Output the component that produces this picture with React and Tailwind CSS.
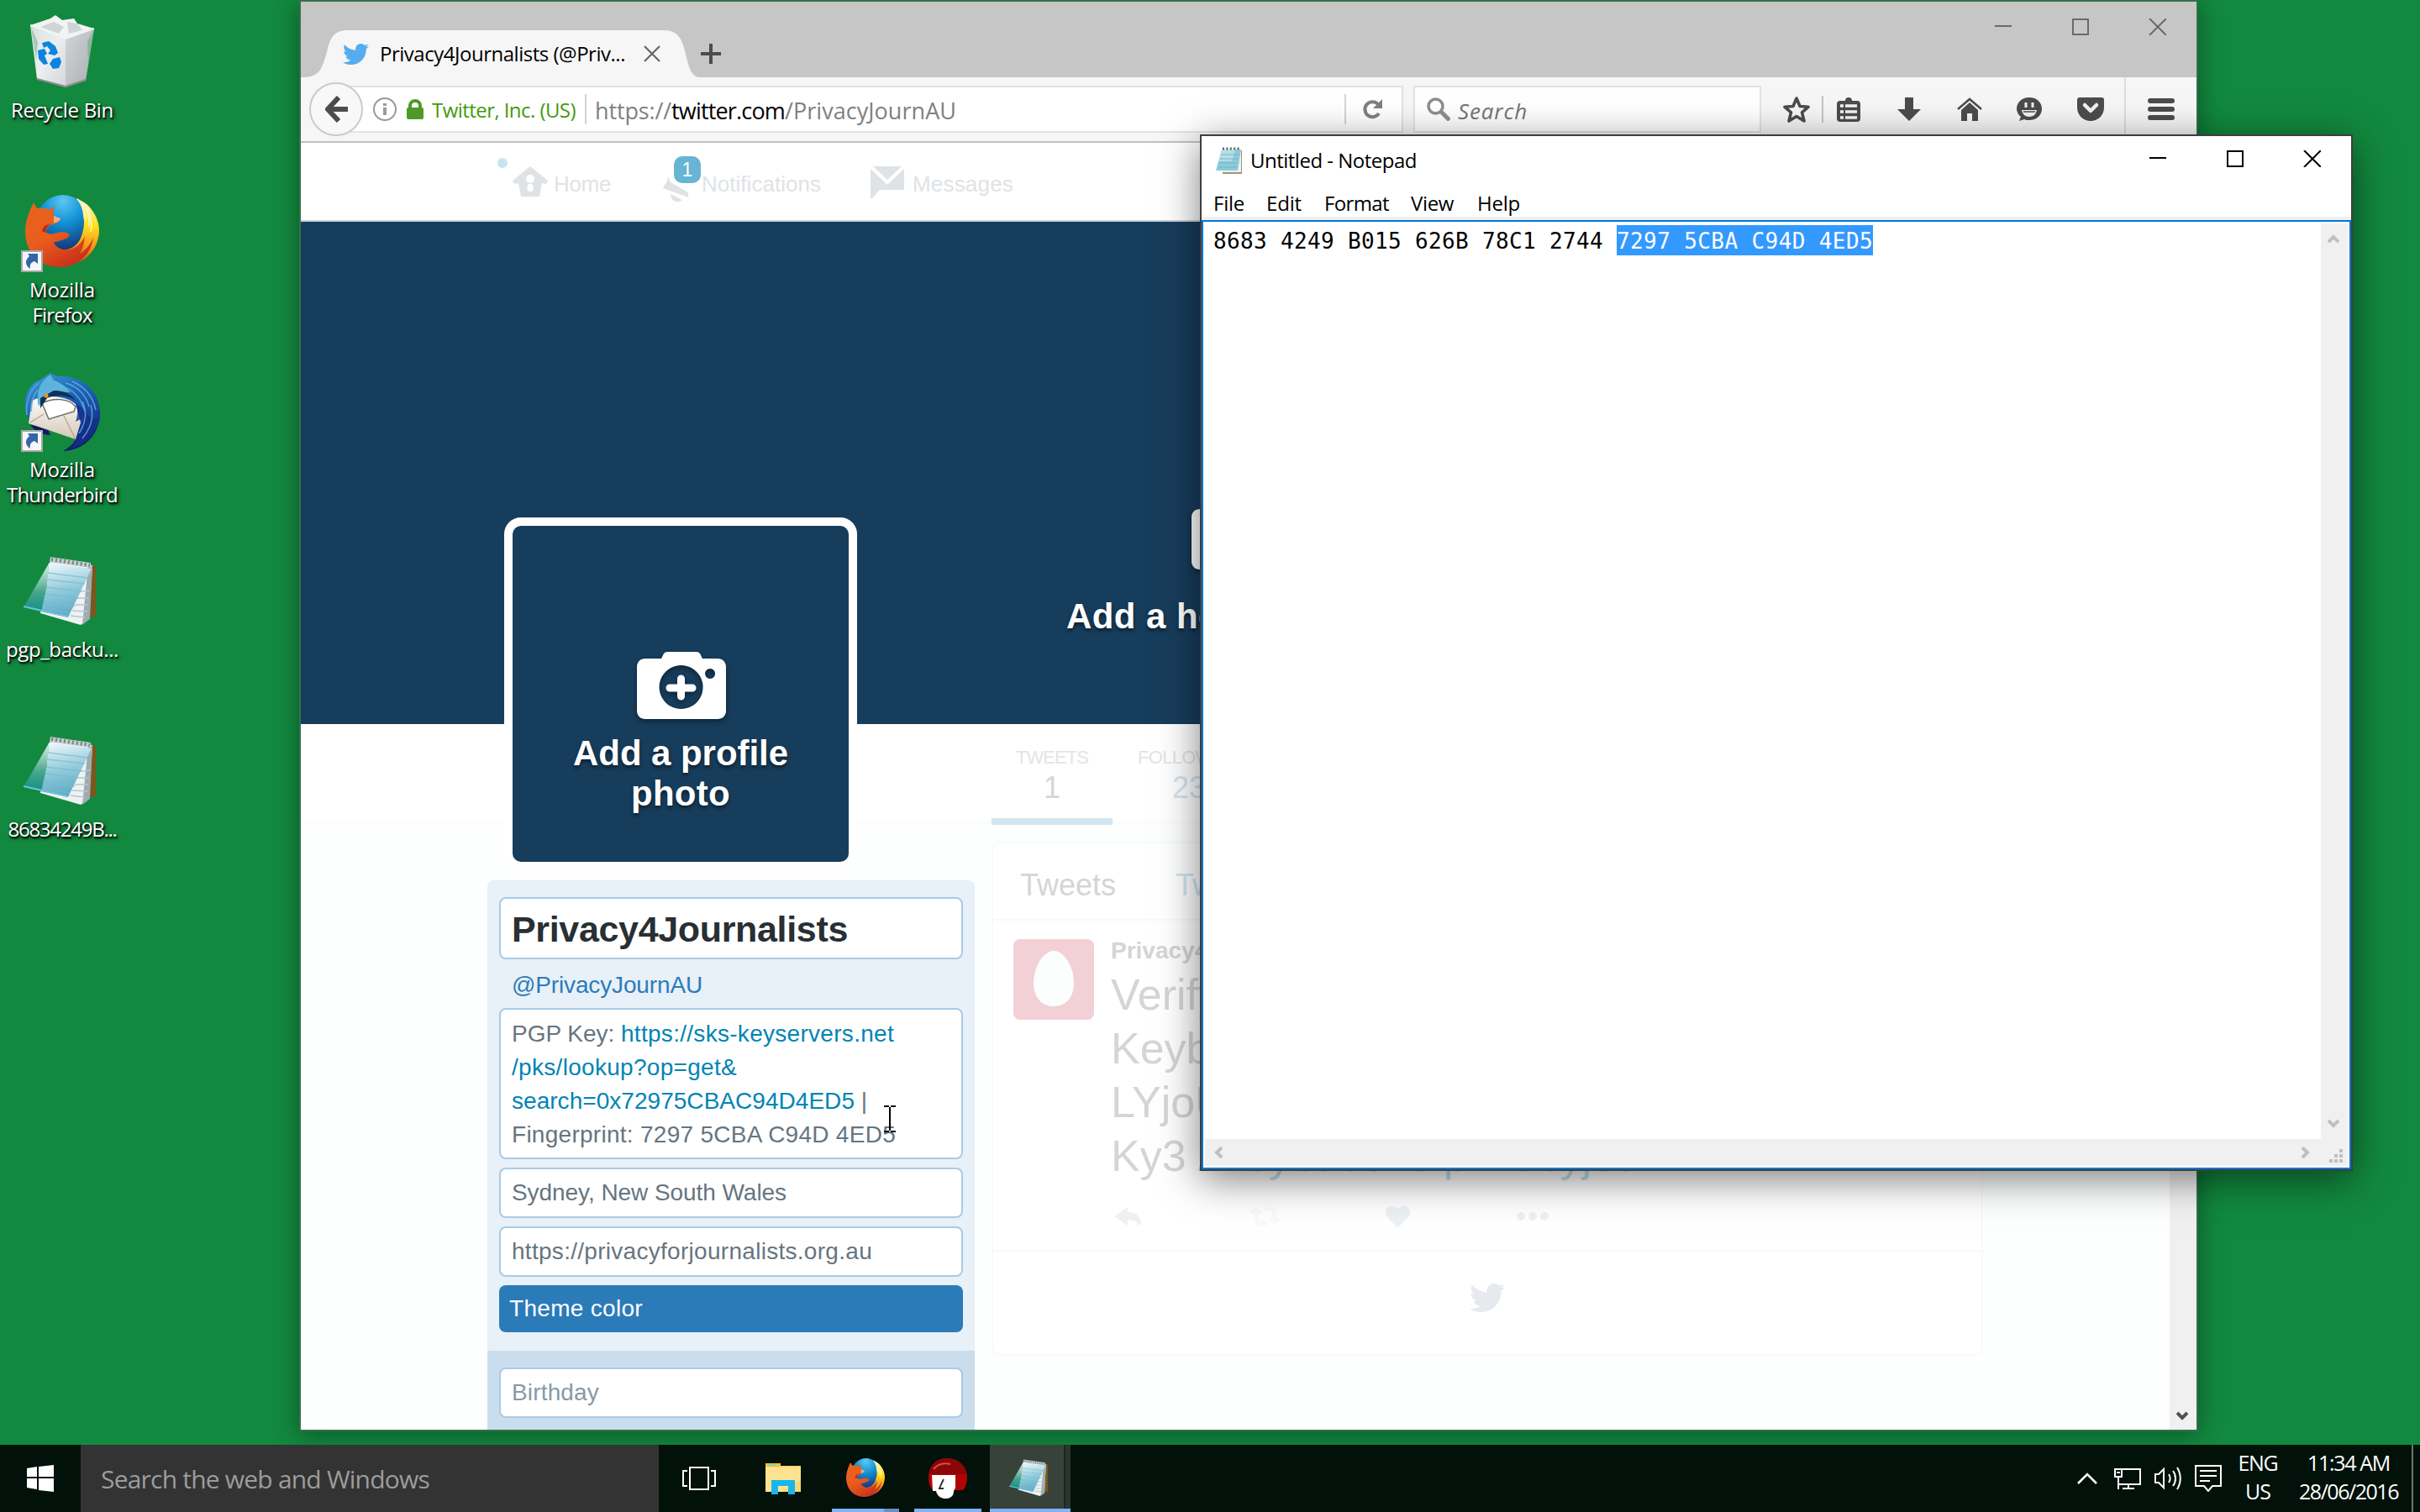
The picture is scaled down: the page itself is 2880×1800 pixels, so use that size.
import React, { useLayoutEffect, useRef, useState } from "react";
import { FaTwitter, FaHeart } from "react-icons/fa";

/* Single line of text spread to a given width through letter spacing. */
function T({ w, className = "", children }) {
  const ref = useRef(null);
  const [ls, setLs] = useState(0);
  useLayoutEffect(() => {
    if (!w) return;
    const natural = ref.current.getBoundingClientRect().width;
    setLs((w - natural) / String(children).length);
  }, []);
  return (
    <span ref={ref} style={{ letterSpacing: `${ls}px` }} className={`inline-block whitespace-pre ${className}`}>
      {children}
    </span>
  );
}

function FirefoxIcon({ className }) {
  return (
    <svg viewBox="0 0 88 74" preserveAspectRatio="none" className={className}>
      <defs>
        <radialGradient id="ffGlobe" cx="0.5" cy="0.1" r="0.95">
          <stop offset="0" stopColor="#5cc8f4" />
          <stop offset="0.4" stopColor="#1292d6" />
          <stop offset="0.75" stopColor="#144f92" />
          <stop offset="1" stopColor="#1c2456" />
        </radialGradient>
        <linearGradient id="ffTail" x1="0" y1="0" x2="0" y2="1">
          <stop offset="0" stopColor="#fffbd0" />
          <stop offset="0.4" stopColor="#ffe01c" />
          <stop offset="0.7" stopColor="#f89a1c" />
          <stop offset="1" stopColor="#dc4a1c" />
        </linearGradient>
        <linearGradient id="ffBody" x1="0" y1="0" x2="0.6" y2="1">
          <stop offset="0" stopColor="#e8641c" />
          <stop offset="0.55" stopColor="#ea5c1e" />
          <stop offset="1" stopColor="#c8321c" />
        </linearGradient>
      </defs>
      <ellipse cx="45" cy="30" rx="33" ry="30" fill="url(#ffGlobe)" />
      <path d="M62 4c8 3 13 6 17 11c6 7 9 14 9 22c-1 20-18 34-40 35l-6-16c12 2 22-5 25-14c3-8 4-14 2-20c0-7-3-13-7-18z" fill="url(#ffTail)" />
      <path d="M62 4c7 7 9 15 10 22M68 8c7 8 9 16 8 25M74 14c5 8 6 16 4 24" stroke="#fff6c0" strokeWidth="1.5" fill="none" />
      <path d="M10 8l4 6c6-1 12 0 16 1l5-4l-2 10c2 3 5 3 9 3c-1 4-5 5-9 6c-5 1-7 4-9 8c5 3 9 2 14 1c5-1 11-2 15 2c-2 4-8 5-12 6c-4 2-7 1-7 2c3 5 10 8 18 7c8-1 15-6 19-14c-1 8-2 13-6 18c7-3 12-9 16-16c-3 18-19 30-40 30C16 74 0 58 0 37c0-9 4-17 6-22z" fill="url(#ffBody)" />
      <path d="M34 21c3 2 6 2 8 3c-1 3-4 4-8 5z" fill="#f4a888" />
      <path d="M24 38c-4 1-5-2-1-6c3-2 7-2 10-3c-5 1-8 4-9 9z" fill="#b8281c" />
    </svg>
  );
}

function ThunderbirdIcon({ className }) {
  return (
    <svg viewBox="0 0 92 94" className={className}>
      <defs>
        <linearGradient id="tbBody" x1="0.2" y1="0" x2="0.7" y2="1">
          <stop offset="0" stopColor="#3a94d0" />
          <stop offset="0.4" stopColor="#1c62b4" />
          <stop offset="0.75" stopColor="#183c94" />
          <stop offset="1" stopColor="#0c1458" />
        </linearGradient>
        <linearGradient id="tbMail" x1="0" y1="0" x2="0" y2="1">
          <stop offset="0" stopColor="#fffefc" />
          <stop offset="1" stopColor="#d4c8b8" />
        </linearGradient>
      </defs>
      <path d="M32 0l8 4c28-2 50 16 51 42c1 26-18 46-44 47c10-6 16-12 16-20L8 58C-4 40 2 14 20 8z" fill="url(#tbBody)" />
      <path d="M8 62c6 8 14 12 24 12l-4-10z" fill="#141a60" />
      <path d="M10 33c14-8 40-6 52 4l6 22l-6 20L6 60z" fill="url(#tbMail)" />
      <path d="M22 36c14-7 32-6 40 4l-2 6l-30 9z" fill="#fff" stroke="#6c665c" strokeWidth="1.4" />
      <path d="M8 59l16-10M62 79L48 51" stroke="#b0a490" strokeWidth="1.2" />
      <path d="M32 2C20 10 14 22 18 40l8-14c8-4 20-4 30-3c-8-8-12-12-20-14z" fill="#5cb4dc" />
      <path d="M20 30l16-9c9 0 20 2 26 12c-12-8-26-6-34-3l-8 12z" fill="#123058" />
      <circle cx="27" cy="27" r="2.6" fill="#f0901c" />
      <path d="M62 36c4 8 2 16 0 22l8-4c0 14-4 26-14 36c18-4 32-18 35-38C80 62 76 44 62 36z" fill="#16308c" opacity="0.8" />
      <path d="M50 12c14 4 24 14 28 28M58 10c14 6 24 16 28 34M44 16c14 2 26 14 30 34M70 34c6 12 4 26-4 38M80 38c4 14 0 28-10 40" stroke="#6cbce8" strokeWidth="1.6" fill="none" opacity="0.7" />
      <path d="M4 50C2 34 8 20 18 12M9 46c0-10 3-20 8-26" stroke="#58a8dc" strokeWidth="2" fill="none" opacity="0.8" />
    </svg>
  );
}

function NotepadIcon({ className }) {
  return (
    <svg viewBox="0 0 86 82" className={className}>
      <defs>
        <linearGradient id="npPage" x1="0.3" y1="0" x2="0.5" y2="1">
          <stop offset="0" stopColor="#eaf6fa" />
          <stop offset="0.5" stopColor="#90cbdb" />
          <stop offset="1" stopColor="#5aa8c4" />
        </linearGradient>
        <linearGradient id="npFold" x1="0" y1="0" x2="0" y2="1">
          <stop offset="0" stopColor="#dff2ea" />
          <stop offset="0.6" stopColor="#46a58c" />
          <stop offset="1" stopColor="#148f86" />
        </linearGradient>
      </defs>
      <path d="M78 10l8 2v60l-8 1z" fill="#7c561c" />
      <path d="M32 6L20 68l48 14l10-7l4-64z" fill="#eef2f4" />
      <path d="M77 11l5 1l-3 63l-9 7z" fill="#9dabb2" />
      <path d="M68 42l11-1M64 50l14 0M61 58l16 0M58 65l18 1M56 71l17 2" stroke="#b8c6cc" strokeWidth="1.5" />
      <path d="M30 9L0 61l22 5l6-30z" fill="url(#npFold)" />
      <path d="M30 8l51 7L53 73L21 66l7-30z" fill="url(#npPage)" />
      <path d="M29 20l48 6M28 28l45 5M27 37l42 5M26 45l39 5M24 54l37 6M23 62l32 6" stroke="#7fb9cc" strokeWidth="1.4" opacity="0.7" />
      <path d="M0 60l22 5l31 7" stroke="#6cc4dc" strokeWidth="2" fill="none" />
      <path d="M32 1l48 7v6l-49-7z" fill="#c8d0d2" />
      <path d="M33 4l46 7" stroke="#7c8688" strokeWidth="4.5" strokeDasharray="2.2 2.8" />
    </svg>
  );
}

function RecycleIcon({ className }) {
  return (
    <svg viewBox="0 0 76 86" className={className}>
      <defs>
        <linearGradient id="rbL" x1="0" y1="0" x2="1" y2="1">
          <stop offset="0" stopColor="#d8e0e0" />
          <stop offset="0.5" stopColor="#eceef0" />
          <stop offset="1" stopColor="#d4d8dc" />
        </linearGradient>
        <linearGradient id="rbR" x1="0" y1="0" x2="1" y2="1">
          <stop offset="0" stopColor="#d4d6d8" />
          <stop offset="1" stopColor="#a8aeb2" />
        </linearGradient>
      </defs>
      <path d="M0 12l42 16v58L8 76z" fill="url(#rbL)" />
      <path d="M76 16L42 28v58l24-8z" fill="url(#rbR)" />
      <path d="M0 12L24 4l6-4l8 6l14-2l4 6l20 6l-34 12z" fill="#f2f4f4" />
      <path d="M12 14l16-6l12 6l-6 8zM44 8l12 2l6 8l-16 4z" fill="#cfd4d6" />
      <path d="M0 12l42 16l34-12" fill="none" stroke="#eef4f2" strokeWidth="2" />
      <path d="M60 36l8-6l-4 20l-8 14l6-16z" fill="#bcc2c6" />
      <path d="M1 14l6 40l2-22z" fill="#5aa97a" opacity="0.45" />
      <path d="M75 18l-6 44l-1-30z" fill="#5aa97a" opacity="0.5" />
      <path d="M8 76l34 9l24-8" fill="none" stroke="#8c8c8c" strokeWidth="2" />
      <g fill="#0a84e0">
        <path d="M14 33l8-2l8 6l3 8l-4 3l-8-2l3-4l-4-5l-4 2z" />
        <path d="M9 42l8-2l3 6l-3 2l4 10l-5 1l-6-7z" />
        <path d="M23 58l4-6l8-2l2 6l-3 7l-7 1z" />
      </g>
    </svg>
  );
}

function Shortcut() {
  return (
    <svg viewBox="0 0 26 26" className="absolute bottom-0 left-0 h-[26px] w-[26px]">
      <rect x="1" y="1" width="24" height="24" fill="#f6f6f6" stroke="#a8a8a8" strokeWidth="2" />
      <path d="M8 4h12v12l-4-3c-4 1-6 4-5 9c-6-4-7-10-1-15z" fill="#3465a8" />
    </svg>
  );
}

function DesktopItem({ icon, lines }) {
  return (
    <div className="flex h-[214px] flex-col items-center">
      <div className="flex h-[104px] w-full justify-center">{icon}</div>
      {lines.map(([text, w]) => (
        <T key={text} w={w} className="text-[24px] leading-[30px] text-white [text-shadow:1px_2px_2px_#000,2px_2px_4px_rgba(0,0,0,.8)]">
          {text}
        </T>
      ))}
    </div>
  );
}

function WinControls({ color, gap }) {
  return (
    <svg viewBox="0 0 204 20" className={gap} fill="none" stroke={color} strokeWidth="2">
      <path d="M0 9h20" />
      <rect x="93" y="1" width="18" height="18" />
      <path d="M184 0l20 20M204 0l-20 20" />
    </svg>
  );
}

function Camera({ className }) {
  return (
    <svg viewBox="0 0 106 80" className={className}>
      <path fill="#fff" fillRule="evenodd" d="M10 8H29l3-6c1-1 2-2 4-2h35c2 0 3 1 4 2l3 6h18c6 0 10 4 10 10v52c0 6-4 10-10 10H10C4 80 0 76 0 70V18C0 12 4 8 10 8zM52.500 16a26 26 0 1 0 .1 0zM87 20a6 6 0 1 0 .1 0z" />
      <path stroke="#fff" strokeWidth="9" strokeLinecap="round" d="M39 43h27M52.500 32v21" />
    </svg>
  );
}

function ToolIcons() {
  return (
    <div className="flex items-center">
      <svg viewBox="0 0 32 32" className="ml-[26px] h-8 w-8" fill="none" stroke="#4c4c4c" strokeWidth="3.600" strokeLinejoin="round">
        <path d="M16 3l4 9.500l10 .8l-7.500 6.500L25 30l-9-5.500L7 30l2.500-10.200L2 13.300l10-.8z" />
      </svg>
      <div className="ml-[14px] h-8 w-[2px] bg-[#c4c4c4]" />
      <svg viewBox="0 0 28 30" className="ml-4 h-[30px] w-7">
        <path fill="#4c4c4c" d="M4 5h6a4 4 0 0 1 8 0h6a4 4 0 0 1 4 4v17a4 4 0 0 1-4 4H4a4 4 0 0 1-4-4V9a4 4 0 0 1 4-4z" />
        <path stroke="#f4f4f4" strokeWidth="3.600" d="M4 11h4M10 11h14M4 18h4M10 18h14M4 25h4M10 25h14" />
      </svg>
      <svg viewBox="0 0 28 28" className="ml-[44px] h-7 w-7">
        <path fill="#4c4c4c" d="M9 0h10v14h9L14 28L0 14h9z" />
      </svg>
      <svg viewBox="0 0 32 28" className="ml-[42px] h-7 w-8">
        <path d="M2 14L16 2l14 12" stroke="#4c4c4c" strokeWidth="2.500" fill="none" />
        <path fill="#4c4c4c" d="M6 15L16 6l10 9v13h-7v-9h-6v9H6z" />
      </svg>
      <svg viewBox="0 0 30 28" className="ml-[40px] h-7 w-[30px]">
        <path fill="#4c4c4c" d="M15 0c9 0 15 6 15 13.500S24 27 15 27c-3 0-4 0-6-1l-6 2l2-5c-3-2-5-6-5-9.500C0 6 6 0 15 0z" />
        <path stroke="#f2f2f2" strokeWidth="3" d="M11 6v6M19 6v6" />
        <path d="M6 15h18c-1 5-4 8-9 8s-8-3-9-8z" fill="#f2f2f2" />
        <path d="M8 17h14" stroke="#4c4c4c" strokeWidth="1.500" />
      </svg>
      <svg viewBox="0 0 32 28" className="ml-[42px] h-7 w-8">
        <path fill="#4c4c4c" d="M3 0h26a3 3 0 0 1 3 3v9c0 9-7 16-16 16S0 21 0 12V3a3 3 0 0 1 3-3z" />
        <path d="M9 9l7 7l7-7" stroke="#f2f2f2" strokeWidth="4.500" strokeLinecap="round" strokeLinejoin="round" fill="none" />
      </svg>
      <div className="ml-6 h-[76px] w-[2px] bg-[#dcdcdc]" />
      <svg viewBox="0 0 32 26" className="ml-[26px] h-[26px] w-8" stroke="#4c4c4c" strokeWidth="6" strokeLinecap="round">
        <path d="M3 3h26M3 13h26M3 23h26" />
      </svg>
    </div>
  );
}

function FirefoxChrome() {
  return (
    <>
      <div className="flex h-[90px] bg-[#c6c6c6]">
        <div className="relative mt-[34px] flex h-14 w-[476px] items-center">
          <svg viewBox="0 0 476 56" className="absolute inset-0 h-14 w-[476px]">
            <path fill="#f6f6f6" d="M4 56C24 56 26 42 31 26C35 8 40 0 56 0H432C450 0 454 12 458 28C462 44 464 56 476 56z" />
          </svg>
          <FaTwitter className="relative ml-[50px] h-[31px] w-[31px] text-[#55acee]" />
          <T w={292} className="relative -mt-px ml-[13px] text-[24px] leading-8 text-black">Privacy4Journalists (@Priv...</T>
          <svg viewBox="0 0 20 20" className="relative ml-[22px] h-5 w-5" stroke="#666" strokeWidth="2.200"><path d="M1 1l18 18M19 1L1 19" /></svg>
        </div>
        <svg viewBox="0 0 24 24" className="mt-[50px] h-6 w-6" stroke="#4c4c4c" strokeWidth="4"><path d="M0 12h24M12 0v24" /></svg>
        <WinControls color="#6a6a6a" gap="mt-5 ml-auto mr-9 h-5 w-[204px]" />
      </div>
      <div className="flex h-[78px] items-center border-b-2 border-[#c0c0c0] bg-[#f6f6f6]">
        <div className="z-10 ml-[10px] flex h-16 w-16 items-center justify-center rounded-full border-2 border-[#cacaca] bg-[#f8f8f8]">
          <svg viewBox="0 0 28 32" className="h-8 w-7" stroke="#4c4c4c" strokeWidth="6" fill="none" strokeLinecap="butt" strokeLinejoin="round">
            <path d="M17 2L4 16l13 14M4 16h24" />
          </svg>
        </div>
        <div className="-ml-4 flex h-14 w-[1254px] items-center border-2 border-[#e3e3e3] bg-white">
          <svg viewBox="0 0 28 28" className="ml-[26px] h-7 w-7" fill="none" stroke="#9a9a9a" strokeWidth="2">
            <circle cx="14" cy="14" r="13" />
            <path d="M14 12v9M14 7v3" strokeWidth="4" />
          </svg>
          <svg viewBox="0 0 20 24" className="ml-3 h-6 w-5">
            <rect y="10" width="20" height="14" rx="2" fill="#4d9a26" />
            <path d="M4 11V8a6 6 0 0 1 12 0v3" stroke="#4d9a26" strokeWidth="4" fill="none" />
          </svg>
          <T w={171} className="mt-[2px] ml-[10px] text-[24px] leading-8 text-[#449a0a]">Twitter, Inc. (US)</T>
          <div className="ml-[11px] h-9 w-[2px] bg-[#d4d4d4]" />
          <div className="mt-[3px] ml-[10px] flex text-[27px] leading-8 text-[#808080]">
            <T w={91}>https://</T>
            <T w={135} className="text-black">twitter.com</T>
            <T w={204}>/PrivacyJournAU</T>
          </div>
          <div className="ml-auto h-9 w-[2px] bg-[#d4d4d4]" />
          <svg viewBox="0 0 24 24" className="mr-[22px] ml-5 h-6 w-6">
            <path d="M19 17a9 9 0 1 1-1-11" fill="none" stroke="#808080" strokeWidth="4" />
            <path d="M23 0v11H12z" fill="#808080" />
          </svg>
        </div>
        <div className="ml-3 flex h-14 w-[414px] items-center border-2 border-[#e3e3e3] bg-white">
          <svg viewBox="0 0 28 28" className="ml-[14px] h-7 w-7" fill="none" stroke="#8e8e8e">
            <circle cx="10.500" cy="10.500" r="8.500" strokeWidth="3.500" />
            <path d="M17 17l10 10" strokeWidth="5" />
          </svg>
          <T w={83} className="mt-[3px] ml-[9px] text-[26px] leading-8 text-[#757575] italic">Search</T>
        </div>
        <ToolIcons />
      </div>
    </>
  );
}

function TwitterNav() {
  return (
    <div className="relative flex h-[94px] items-start border-b-2 border-[#ccd1d6] bg-white font-['Liberation_Sans',sans-serif] text-[26px] leading-8 text-[#dfe3e6]">
      <div className="absolute top-[18px] left-[234px] h-3 w-3 rounded-full bg-[#c6e5ef]" />
      <svg viewBox="0 0 42 36" className="mt-7 ml-[252px] h-9 w-[42px]">
        <path fill="#dfe3e6" d="M21 0L42 17l-2 4l-5-1l-3 16H10L7 20l-5 1l-2-4z" />
        <circle cx="21" cy="15" r="5" fill="#fff" />
        <rect x="17.500" y="21" width="7" height="9" rx="3" fill="#fff" />
      </svg>
      <T w={68} className="mt-[33px] ml-[7px]">Home</T>
      <div className="relative mt-9 ml-[62px] h-9 w-[46px]">
        <svg viewBox="0 0 30 36" className="h-9 w-[30px]">
          <path fill="#dfe3e6" d="M6 4l3 7l21 12v6L0 18c2-5 6-8 6-14zM9 25l14 7c-4 5-14 2-14-7z" />
        </svg>
        <div className="absolute -top-5 left-[13px] flex h-8 w-8 items-center justify-center rounded-[10px] bg-[#67b4d3] text-[23px] leading-none text-white">1</div>
      </div>
      <T w={142} className="mt-[33px]">Notifications</T>
      <svg viewBox="0 0 40 38" className="mt-7 ml-[59px] h-[38px] w-10">
        <path fill="#dfe3e6" d="M3 0h34L20 16zM0 3l20 19L40 3v25H11L2 38H0z" />
      </svg>
      <T w={120} className="mt-[33px] ml-[10px]">Messages</T>
    </div>
  );
}

function Banner() {
  return (
    <div className="relative h-[598px] bg-[#173d5c] font-['Liberation_Sans',sans-serif] text-[42px] leading-[48px] font-bold text-white">
      <div className="flex flex-col items-center pt-[334px]">
        <Camera className="ml-[2px] h-20 w-[106px] drop-shadow-[0_3px_3px_rgba(0,0,0,.4)]" />
        <T w={402} className="mt-[32px] [text-shadow:0_3px_4px_rgba(0,0,0,.5)]">Add a header photo</T>
      </div>
      <div className="absolute top-[352px] left-[242px] flex h-[420px] w-[420px] flex-col items-center rounded-[20px] border-[10px] border-white bg-[#173d5c]">
        <Camera className="mt-[150px] ml-[2px] h-20 w-[106px] drop-shadow-[0_3px_3px_rgba(0,0,0,.4)]" />
        <T w={256} className="mt-[17px] [text-shadow:0_3px_4px_rgba(0,0,0,.5)]">Add a profile</T>
        <T w={118} className="[text-shadow:0_3px_4px_rgba(0,0,0,.5)]">photo</T>
      </div>
    </div>
  );
}

function Stat({ label, value, w, labelClass, valueClass }) {
  return (
    <div className="flex flex-col items-center">
      <T w={w} className={`text-[22px] leading-6 ${labelClass}`}>{label}</T>
      <span className={`mt-[2px] text-[36px] leading-[44px] ${valueClass}`}>{value}</span>
    </div>
  );
}

const FIELD = "rounded-[8px] border-2 border-[#a9cae6] bg-white pl-[13px]";

function ProfileForm() {
  return (
    <div className="mt-[68px] ml-[222px] h-[654px] w-[580px] rounded-t-lg bg-[#e8f0f8] text-[28px] leading-10 text-[#66757f]">
      <div className="h-[560px] px-[14px] pt-5">
        <div className={`flex h-[74px] items-center pt-[2px] ${FIELD}`}>
          <T w={400} className="text-[43px] leading-[50px] font-bold text-[#292f33]">Privacy4Journalists</T>
        </div>
        <div className="h-[58px] pt-[11px] pl-[15px] text-[#2b7bb9]">
          <T w={227}>@PrivacyJournAU</T>
        </div>
        <div className={`flex h-[180px] flex-col pt-[9px] ${FIELD}`}>
          <div className="flex h-10">
            <T w={130}>PGP Key: </T>
            <T w={325} className="text-[#0084b4]">https://sks-keyservers.net</T>
          </div>
          <T w={268} className="self-start text-[#0084b4]">/pks/lookup?op=get&amp;</T>
          <div className="flex h-10">
            <T w={408} className="text-[#0084b4]">search=0x72975CBAC94D4ED5</T>
            <T>{" |"}</T>
          </div>
          <T w={457} className="self-start">Fingerprint: 7297 5CBA C94D 4ED5</T>
        </div>
        <div className={`mt-[10px] flex h-[60px] items-center ${FIELD}`}><T w={327}>Sydney, New South Wales</T></div>
        <div className={`mt-[10px] flex h-[60px] items-center ${FIELD}`}><T w={429}>https://privacyforjournalists.org.au</T></div>
        <div className="mt-[10px] flex h-14 items-center rounded-lg bg-[#2b7bb9] pl-3 text-white"><T w={159}>Theme color</T></div>
      </div>
      <div className="h-[94px] bg-[#cadded] px-[14px] pt-5">
        <div className={`flex h-[60px] items-center text-[#8899a6] ${FIELD}`}><T w={104}>Birthday</T></div>
      </div>
    </div>
  );
}

function Timeline() {
  return (
    <div className="mt-[22px] ml-5 h-[612px] w-[1180px] rounded-[10px] border-2 border-[#f7fafa] bg-white">
      <div className="flex h-[92px] items-center border-b-2 border-[#f7fafa] pt-[10px] text-[36px]">
        <T w={114} className="ml-8 leading-10 text-[#d4d5d6]">Tweets</T>
        <span className="ml-[71px] leading-10 text-[#cce6f0]">Tweets &amp; replies</span>
      </div>
      <div className="flex h-[394px] items-start border-b-2 border-[#f7fafa]">
        <svg viewBox="0 0 96 96" className="mt-[22px] ml-6 h-24 w-24">
          <rect width="96" height="96" rx="8" fill="#f2d0d6" />
          <path d="M48 14c13 0 24 20 24 38S62 80 48 80S24 70 24 52S35 14 48 14z" fill="#fcfdfd" />
        </svg>
        <div className="ml-5 text-[#d4d5d7]">
          <div className="mt-5 h-8 text-[28px] leading-8 font-bold">Privacy4Journalists</div>
          <div className="mt-[4px] text-[52px] leading-[64px] whitespace-nowrap">
            <div>Verifying myself: I am</div>
            <div>Keybase.io.</div>
            <div>LYjoU</div>
            <div>Ky3 / <span className="text-[#c4dfea]">keybase.io/privacyjourn</span></div>
          </div>
          <div className="mt-[26px] flex h-7 items-center text-[#eef1f4]">
            <svg viewBox="0 0 32 22" className="ml-1 h-[22px] w-8" fill="currentColor">
              <path d="M0 11L16 0v6c10 0 16 5 16 14l-4 2c-1-5-5-7-12-7v7z" />
            </svg>
            <svg viewBox="0 0 38 24" className="ml-[129px] h-6 w-[38px]" fill="#f9fafb">
              <path d="M8 0l8 9h-5v9h8l4 5H6V9H0zM16 1h16v13h6l-8 10l-8-10h5V6h-7z" />
            </svg>
            <FaHeart className="ml-[124px] h-[29px] w-[29px]" />
            <svg viewBox="0 0 38 10" className="ml-[127px] h-[10px] w-[38px]" fill="currentColor">
              <circle cx="5" cy="5" r="5" /><circle cx="19" cy="5" r="5" /><circle cx="33" cy="5" r="5" />
            </svg>
          </div>
        </div>
      </div>
      <div className="flex h-[120px] justify-center pt-[34px]">
        <FaTwitter className="h-[42px] w-[42px] text-[#e6eaee]" />
      </div>
    </div>
  );
}

function FirefoxWindow() {
  return (
    <div className="absolute top-0 left-[356px] flex h-[1704px] w-[2260px] flex-col border-2 border-[#34704c] bg-white shadow-[0_4px_28px_rgba(0,0,0,.38)]">
      <FirefoxChrome />
      <div className="flex h-[1532px] overflow-hidden">
        <div className="w-[2224px] bg-[#fcfffe] font-['Liberation_Sans',sans-serif]">
          <TwitterNav />
          <Banner />
          <div className="flex h-[118px] border-b-2 border-[#f8fafa] bg-white pl-[822px]">
            <div className="z-0 h-[120px] w-36 border-b-8 border-[#d4e4f1] pt-[28px]">
              <Stat label="TWEETS" value="1" w={86} labelClass="text-[#e2e5e8]" valueClass="text-[#d4d6d8]" />
            </div>
            <div className="w-[186px] pt-[28px]">
              <Stat label="FOLLOWING" value="23" w={126} labelClass="text-[#e2e5e8]" valueClass="mr-[4px] text-[#d4e4f1]" />
            </div>
          </div>
          <div className="flex items-start">
            <ProfileForm />
            <Timeline />
          </div>
        </div>
        <div className="flex w-8 flex-col justify-end bg-[#f0f0f0] pb-[10px] pl-2">
          <svg viewBox="0 0 14 12" className="h-3 w-[14px]" fill="none" stroke="#505050" strokeWidth="4"><path d="M1 2l6 6l6-6" /></svg>
        </div>
      </div>
    </div>
  );
}

const MENU = [["File", 37, ""], ["Edit", 42, "ml-[26px]"], ["Format", 77, "ml-[27px]"], ["View", 51, "ml-[26px]"], ["Help", 51, "ml-[28px]"]];

function NotepadSmall() {
  return (
    <svg viewBox="0 0 32 32" className="ml-[17px] h-8 w-8">
      <path d="M9 4h22v28H8z" fill="#a09478" />
      <path d="M9 4h21v26H8z" fill="#eef2f4" />
      <path d="M7 3h23l-4 25H0z" fill="#8ccbd8" />
      <path d="M7 3h16l-4 14H3z" fill="#bfe3ea" opacity="0.8" />
      <path d="M6 9h22M5 14h22M4 19h22M3 24h22" stroke="#74b8c8" strokeWidth="1" />
      <path d="M8 2h21" stroke="#5a6467" strokeWidth="3" strokeDasharray="2 2.400" />
    </svg>
  );
}

function NotepadWindow() {
  return (
    <div className="absolute top-[160px] left-[1428px] flex h-[1234px] w-[1372px] flex-col border-2 border-[#3e3e3e] bg-white shadow-[0_10px_44px_rgba(0,0,0,.5)]">
      <div className="flex h-[58px] items-center">
        <NotepadSmall />
        <T w={198} className="ml-[9px] text-[24px] leading-8 text-black">Untitled - Notepad</T>
        <WinControls color="#000" gap="mb-1 ml-auto mr-[36px] h-5 w-[204px]" />
      </div>
      <div className="flex h-[42px] items-center border-b-4 border-[#f0f0f0] pt-[5px] pl-[14px] text-[24px] leading-8 text-black">
        {MENU.map(([t, w, m]) => <T key={t} w={w} className={m}>{t}</T>)}
      </div>
      <div className="flex h-[1130px] flex-col border-2 border-[#0078d7] p-[2px]">
        <div className="flex h-[1090px]">
          <div className="flex flex-1 items-start pt-[2px] pl-[10px] font-['DejaVu_Sans_Mono',monospace] text-[26px] text-black">
            <T w={480} className="h-9 leading-[38px]">{"8683 4249 B015 626B 78C1 2744 "}</T>
            <T w={305} className="h-9 bg-[#3399ff] leading-[38px] text-white">7297 5CBA C94D 4ED5</T>
          </div>
          <div className="flex w-8 flex-col justify-between bg-[#f0f0f0] py-3 pl-2">
            <svg viewBox="0 0 14 12" className="h-3 w-[14px]" fill="none" stroke="#bfbfbf" strokeWidth="4"><path d="M1 10l6-6l6 6" /></svg>
            <svg viewBox="0 0 14 12" className="h-3 w-[14px]" fill="none" stroke="#bfbfbf" strokeWidth="4"><path d="M1 2l6 6l6-6" /></svg>
          </div>
        </div>
        <div className="flex h-8 items-center bg-[#f0f0f0] pl-[10px]">
          <svg viewBox="0 0 12 14" className="h-[14px] w-3" fill="none" stroke="#bfbfbf" strokeWidth="4"><path d="M10 1L4 7l6 6" /></svg>
          <svg viewBox="0 0 12 14" className="ml-auto h-[14px] w-3" fill="none" stroke="#bfbfbf" strokeWidth="4"><path d="M2 1l6 6l-6 6" /></svg>
          <svg viewBox="0 0 16 16" className="mt-2 mr-[6px] ml-[22px] h-4 w-4" fill="#bfbfbf">
            <path d="M12 0h4v4h-4zM6 6h4v4H6zM12 6h4v4h-4zM0 12h4v4H0zM6 12h4v4H6zM12 12h4v4h-4z" />
          </svg>
        </div>
      </div>
    </div>
  );
}

function Taskbar() {
  return (
    <div className="absolute bottom-0 left-0 flex h-20 w-[2880px] items-stretch bg-[#021109] text-white">
      <div className="flex w-24 items-center justify-center">
        <svg viewBox="0 0 32 32" className="h-8 w-8" fill="#fff"><path d="M0 4l12-2v12H0zM14 2l18-2v14H14zM0 16h12v13L0 27zM14 16h18v16l-18-2z" /></svg>
      </div>
      <div className="flex w-[688px] items-center bg-[#333] pt-[2px] pl-6"><T w={391} className="text-[30px] leading-9 text-[#9c9c9c]">Search the web and Windows</T></div>
      <div className="flex w-24 items-center justify-center">
        <svg viewBox="0 0 40 28" className="h-7 w-10" fill="none" stroke="#fff" strokeWidth="2"><rect x="9" y="1" width="22" height="26" /><path d="M6 5H1v18h5M34 5h5v18h-5" /></svg>
      </div>
      <div className="flex w-[110px] items-center pl-[30px]">
        <svg viewBox="0 0 44 38" className="h-[38px] w-11">
          <path d="M1 1h18v3h24v31H1z" fill="#f8d774" />
          <path d="M1 6h42v14L22 35H1z" fill="#fde391" />
          <path d="M1 1h18v4H1z" fill="#f4c430" />
          <path d="M4 3h10" stroke="#7fd0c0" strokeWidth="2" />
          <path d="M8 21h28v17h-8V28H16v10H8z" fill="#19b5ee" />
        </svg>
      </div>
      <div className="flex w-20 flex-col justify-between">
        <FirefoxIcon className="mt-4 ml-[17px] h-[46px] w-[46px]" />
        <div className="flex h-1"><div className="w-[62px] bg-[#7db4f8]" /><div className="w-[18px] bg-[#6590c8]" /></div>
      </div>
      <div className="ml-[18px] flex w-20 flex-col justify-between border-b-4 border-[#7db4f8]">
        <svg viewBox="0 0 46 48" className="mt-4 ml-[17px] h-12 w-[46px]">
          <path d="M22 0c14 0 24 10 24 23c0 6-2 12-5 15H5C1 34 0 28 0 23C0 10 8 0 22 0z" fill="#b00404" />
          <path d="M22 0C34 0 44 8 45 19H1C2 8 10 0 22 0z" fill="#8c0606" />
          <path d="M6 13c5-6 12-8 20-6" stroke="#d65050" strokeWidth="2" fill="none" />
          <path d="M4 20h28v15l-2 4c0 6-4 9-10 9S10 44 9 39H5z" fill="#fff" />
          <path d="M18 25l-3 6M15 31l-2 5h5" stroke="#333" strokeWidth="2" fill="none" />
        </svg>
      </div>
      <div className="ml-[10px] flex w-24 border-b-4 border-[#7db4f8]">
        <div className="w-[88px] bg-[#37423a]"><NotepadIcon className="mt-4 ml-[23px] h-[46px] w-[46px]" /></div>
        <div className="w-[2px] bg-[#1c2620]" />
        <div className="w-[6px] bg-[#2b362f]" />
      </div>
      <div className="ml-auto flex items-center">
        <svg viewBox="0 0 24 14" className="h-[14px] w-6" fill="none" stroke="#fff" strokeWidth="2.600"><path d="M1 13L12 2l11 11" /></svg>
        <svg viewBox="0 0 32 28" className="ml-5 h-7 w-8" fill="none" stroke="#fff" strokeWidth="2"><path d="M10 3h21v18H6M5 12v15M10 26h14M17 21v5" /><rect x="1" y="3" width="8" height="9" /><path d="M3 7h4" /></svg>
        <svg viewBox="0 0 32 28" className="ml-4 h-7 w-8" fill="none" stroke="#fff" strokeWidth="2"><path d="M1 9h4l6-6v22l-6-6H1zM17 9c2 3 2 7 0 10M22 5c4 5 4 13 0 18M27 1c5 8 5 18 0 26" /></svg>
        <svg viewBox="0 0 32 32" className="ml-4 h-8 w-8" fill="none" stroke="#fff" strokeWidth="2"><path d="M1 1h30v24H21l-5 6l-5-6H1zM6 7h20M6 13h20M6 19h12" /></svg>
        <div className="mb-1 ml-[19px] flex w-[48px] flex-col items-center text-[25px] leading-[34px]"><T w={47}>ENG</T><T w={30}>US</T></div>
        <div className="mb-1 ml-[24px] flex w-[120px] flex-col items-center text-[25px] leading-[34px]"><T w={98}>11:34 AM</T><T w={118}>28/06/2016</T></div>
        <div className="mr-2 ml-[15px] h-20 w-[2px] bg-[#6c7772]" />
      </div>
    </div>
  );
}

export default function App() {
  return (
    <div className="relative h-[1800px] w-[2880px] overflow-hidden bg-[#12893e] font-['Open_Sans','Noto_Sans',sans-serif]">
      <div className="flex w-[148px] flex-col pt-3">
        <DesktopItem icon={<RecycleIcon className="mt-[6px] h-[86px] w-[76px]" />} lines={[["Recycle Bin", 122]]} />
        <DesktopItem
          icon={<div className="relative mr-0.5 h-[98px] w-24"><FirefoxIcon className="mt-[6px] ml-[5px] h-[86px] w-[88px]" /><Shortcut /></div>}
          lines={[["Mozilla", 78], ["Firefox", 71]]}
        />
        <DesktopItem
          icon={<div className="relative mr-0.5 h-[98px] w-24"><ThunderbirdIcon className="mt-[4px] ml-[3px] h-[94px] w-[92px]" /><Shortcut /></div>}
          lines={[["Mozilla", 78], ["Thunderbird", 132]]}
        />
        <DesktopItem icon={<NotepadIcon className="mt-2 mr-1.5 h-[82px] w-[86px]" />} lines={[["pgp_backu...", 134]]} />
        <DesktopItem icon={<NotepadIcon className="mt-2 mr-1.5 h-[82px] w-[86px]" />} lines={[["86834249B...", 129]]} />
      </div>
      <FirefoxWindow />
      <NotepadWindow />
      <svg viewBox="0 0 14 32" className="absolute top-[1316px] left-[1052px] h-8 w-[14px]" stroke="#000" strokeWidth="2" fill="none">
        <path d="M0 1h6M8 1h6M7 2v28M0 31h6M8 31h6" />
      </svg>
      <Taskbar />
    </div>
  );
}
